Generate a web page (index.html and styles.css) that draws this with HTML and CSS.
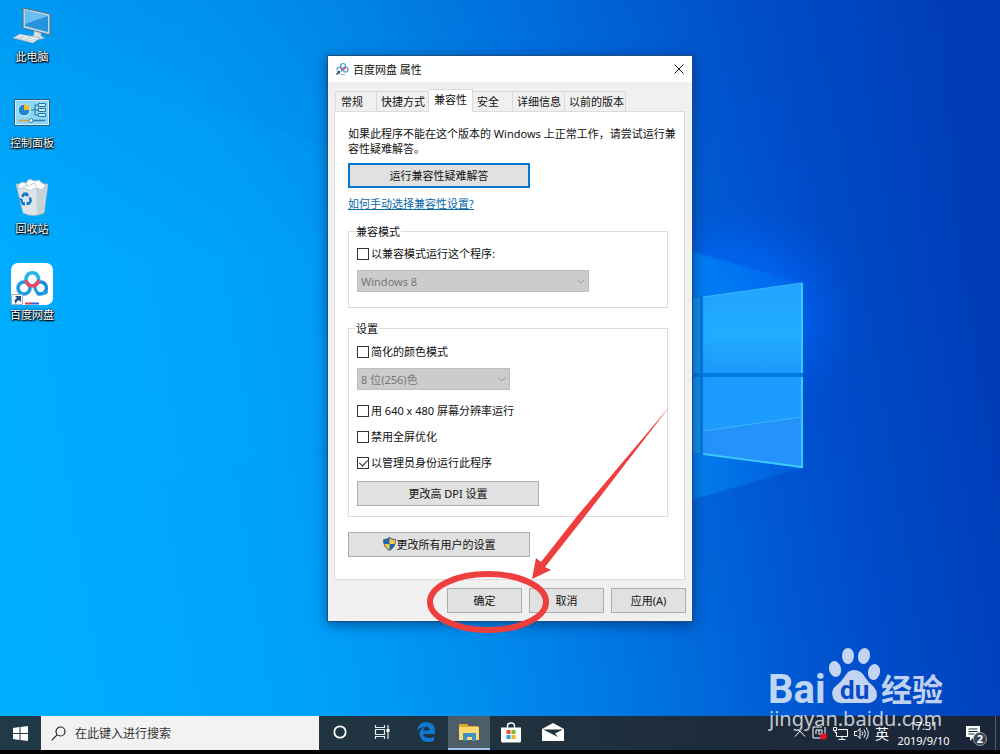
FILE: index.html
```html
<!DOCTYPE html>
<html lang="zh-CN">
<head>
<meta charset="utf-8">
<meta name="viewport" content="width=device-width, initial-scale=1">
<title>百度网盘 属性</title>
<link rel="stylesheet" href="styles.css">
</head>
<body>
<div class="desktop">
  <svg class="wallpaper" viewBox="0 0 1000 754" preserveAspectRatio="none" aria-hidden="true">
    <defs>
      <linearGradient id="base" x1="0" y1="0.56" x2="1" y2="0.44">
        <stop offset="0" stop-color="#00aeff"/>
        <stop offset="0.25" stop-color="#00a2fa"/>
        <stop offset="0.4" stop-color="#0092f0"/>
        <stop offset="0.6" stop-color="#0072e0"/>
        <stop offset="0.8" stop-color="#004fcc"/>
        <stop offset="1" stop-color="#003ab6"/>
      </linearGradient>
      <linearGradient id="shade" x1="0" y1="0" x2="0" y2="1">
        <stop offset="0" stop-color="#0048b8" stop-opacity="0.18"/>
        <stop offset="0.35" stop-color="#0048b8" stop-opacity="0"/>
      </linearGradient>
      <radialGradient id="glow">
        <stop offset="0" stop-color="#0078ff" stop-opacity="0.95"/>
        <stop offset="0.55" stop-color="#0068ff" stop-opacity="0.5"/>
        <stop offset="1" stop-color="#0058e8" stop-opacity="0"/>
      </radialGradient>
      <linearGradient id="pane" x1="0" y1="0" x2="0" y2="1">
        <stop offset="0" stop-color="#22a4ff"/>
        <stop offset="0.6" stop-color="#20acff"/>
        <stop offset="1" stop-color="#1c98fc"/>
      </linearGradient>
      <linearGradient id="ray" x1="0" y1="0" x2="1" y2="0">
        <stop offset="0" stop-color="#0088f4" stop-opacity="0.75"/>
        <stop offset="1" stop-color="#0070f0" stop-opacity="0.3"/>
      </linearGradient>
    </defs>
    <rect width="1000" height="754" fill="url(#base)"/>
    <rect width="1000" height="754" fill="url(#shade)"/>
    <path d="M0 50L330 146V440L0 520z" fill="#00b4ff" opacity="0.1"/>
    <ellipse cx="740" cy="315" rx="120" ry="115" fill="url(#glow)"/>
    <path d="M690 251L803 283V468L690 500z" fill="url(#ray)"/>
    <path d="M690 298L803 282V468L690 453z" fill="#0078dc"/>
    <path d="M703 297L803 283V373H703z" fill="url(#pane)"/>
    <path d="M703 377H803V468L703 454z" fill="#1c9cff"/>
    <path d="M703 431L803 417V468L703 454z" fill="#2492fa"/>
    <path d="M690 298H700V373H690zM690 377H700V453H690z" fill="#168fea"/>
    <path d="M703 297L802 283" fill="none" stroke="#34b8ff"/>
    <path d="M802 283V373M802 377V467L703 454" fill="none" stroke="#3cc8ff" stroke-width="2"/>
    <path d="M703 431L802 417" stroke="#3cb4ff"/>
  </svg>

  <main class="workspace">
    <nav class="shortcuts" aria-label="桌面">
      <button class="shortcut" type="button">
        <span class="shortcut-icon">
          <svg width="40" height="38" viewBox="0 0 40 38">
            <path d="M11 1L38 7V28L11 21z" fill="#b9d4e4" stroke="#52707f"/>
            <path d="M13 3.500L36 9V25L13 19z" fill="#2793df"/>
            <path d="M13 3.500L36 9L13 17z" fill="#6abdf0"/>
            <path d="M22 24l7 2v3l4 2-8 2-9-3 6-2z" fill="#d6e0e5" stroke="#8aa0ac" stroke-width=".6"/>
            <path d="M8 27L28 31L21 36L1 31z" fill="#f3f6f7" stroke="#8fa4ae" stroke-width=".7"/>
            <path d="M6 29l19 4M4 30.500l19 4M13 28l-6 4M19 29.500l-6 4" stroke="#b2bfc5" stroke-width=".7"/>
          </svg>
        </span>
        <span class="shortcut-label">此电脑</span>
      </button>
      <button class="shortcut" type="button">
        <span class="shortcut-icon">
          <svg width="36" height="27" viewBox="0 0 36 27">
            <rect x=".5" y=".5" width="35" height="26" fill="#8dd6f6" stroke="#31617a"/>
            <rect x="1.500" y="1.500" width="33" height="24" fill="none" stroke="#c9effc"/>
            <circle cx="10" cy="11" r="6" fill="#1d86cf" stroke="#e4f6fd"/>
            <path d="M10 11V5a6 6 0 0 1 6 6z" fill="#f7b92e"/>
            <path d="M17 11h4V6h3M21 11h3M21 11v5h3" fill="none" stroke="#25759f"/>
            <path d="M24.500 4.500h7v3h-7zM24.500 9.500h7v3h-7zM24.500 14.500h7v3h-7z" fill="#c9effc" stroke="#25759f"/>
            <path d="M4 21.500h12" stroke="#dd9f36" stroke-width="1.500"/>
            <path d="M16 21.500h15" stroke="#2c7dad" stroke-width="1.500"/>
            <circle cx="17" cy="21.500" r="2" fill="#fff" stroke="#2c7dad"/>
          </svg>
        </span>
        <span class="shortcut-label">控制面板</span>
      </button>
      <button class="shortcut" type="button">
        <span class="shortcut-icon">
          <svg width="34" height="38" viewBox="0 0 34 38">
            <path d="M1 5h32l-4 29q-11 5-21 0z" fill="#dfe6ea" stroke="#a6b6bf" stroke-width=".7"/>
            <path d="M21 8l11-2-4 28-6 2z" fill="#c6d1d8"/>
            <path d="M3 6l4-3 4 1 3-4 6 2 4-1 3 3 4 2-4 5-6-2-6 3-6-3-5 1z" fill="#fafbfb" stroke="#a9b6bd" stroke-width=".7"/>
            <path d="M10 4l4 3 5-3 3 4M8 8l5-2" fill="none" stroke="#b4c0c6" stroke-width=".8"/>
            <path d="M6 17l2.500-3.500h4L14 17l-3 .5-1-1.500L8.500 18.500zM13.500 19l2.500-1 1 4-2.500 4h-3v-3h2l1-1.500zM4.500 19l3 1 .5 3 2 .5v3L7 26z" fill="#1476c8"/>
          </svg>
        </span>
        <span class="shortcut-label">回收站</span>
      </button>
      <button class="shortcut" type="button">
        <span class="shortcut-icon">
          <svg width="42" height="42" viewBox="0 0 42 42">
            <rect width="42" height="42" rx="7" fill="#fff"/>
            <g fill="none" stroke-width="3.600" stroke-linecap="round">
              <circle cx="13" cy="25" r="6" stroke="#1a9be4"/>
              <path d="M24.500 21.500A6 6 0 1 1 27 30.500" stroke="#1a8fe0"/>
              <path d="M24.500 21.500Q22.500 25 27 30.500" stroke="#1a9be4" stroke-width="3"/>
              <path d="M32 30Q34.500 31 36 29" stroke="#1fa4e8" stroke-width="2.500"/>
              <path d="M15.300 18A6.300 6.300 0 1 1 27.300 18" stroke="#2cb2e8"/>
              <path d="M15.300 18.500A6.300 6.300 0 0 0 27.300 18.500" stroke="#ed4866"/>
            </g>
            <path d="M14 40.500h6" stroke="#e7364c" stroke-width="2"/>
            <path d="M20 40.500h8" stroke="#2a65d8" stroke-width="2"/>
            <path d="M.5 31.500h11v10H.5z" fill="#f5f7f9" stroke="#a8b3bd"/>
            <path d="M4 33h6v6l-2-2q-3 1-3 4-3-4 1-6z" fill="#174b7e"/>
          </svg>
        </span>
        <span class="shortcut-label">百度网盘</span>
      </button>
    </nav>

    <section class="dialog" role="dialog" aria-labelledby="dialog-title">
      <header class="titlebar">
        <svg width="14" height="14" viewBox="0 0 14 14" aria-hidden="true">
          <g fill="none" stroke-width="1.200">
            <circle cx="8" cy="4" r="2.500" stroke="#38a5d8"/>
            <circle cx="4.500" cy="7.500" r="2.500" stroke="#3c9bd0"/>
            <circle cx="10.500" cy="7.500" r="2.500" stroke="#3c9bd0"/>
            <path d="M5.500 5a2.500 2.500 0 0 0 5 0" stroke="#df5671"/>
          </g>
          <path d="M1 8h5v5H1z" fill="#e8edf1"/>
          <path d="M2 9h3v3l-1-1-2 2-1-1 2-2z" fill="#34506a"/>
          <path d="M6 12.500h4" stroke="#b1a6bd"/>
        </svg>
        <h1 class="title" id="dialog-title">百度网盘 属性</h1>
        <button class="close" type="button" aria-label="关闭">
          <svg width="10" height="10" viewBox="0 0 10 10"><path d="M.5 .5l9 9M9.500 .5l-9 9" stroke="#111"/></svg>
        </button>
      </header>

      <div class="tabs" role="tablist">
        <button class="tab" type="button" role="tab">常规</button>
        <button class="tab" type="button" role="tab">快捷方式</button>
        <button class="tab tab-active" type="button" role="tab" aria-selected="true">兼容性</button>
        <button class="tab" type="button" role="tab">安全</button>
        <button class="tab" type="button" role="tab">详细信息</button>
        <button class="tab" type="button" role="tab">以前的版本</button>
      </div>

      <div class="panel" role="tabpanel">
        <p class="intro">如果此程序不能在这个版本的 Windows 上正常工作，请尝试运行兼容性疑难解答。</p>
        <button class="button button-wide button-default" type="button">运行兼容性疑难解答</button>
        <a class="help" href="#">如何手动选择兼容性设置?</a>

        <fieldset class="group group-mode">
          <legend>兼容模式</legend>
          <label class="check"><input type="checkbox">以兼容模式运行这个程序:</label>
          <div class="picker picker-long">
            <select aria-label="兼容模式" disabled><option>Windows 8</option></select>
            <svg class="chevron" width="8" height="5" viewBox="0 0 8 5"><path d="M.5 .5L4 4L7.500 .5" fill="none" stroke="#999"/></svg>
          </div>
        </fieldset>

        <fieldset class="group group-settings">
          <legend>设置</legend>
          <label class="check"><input type="checkbox">简化的颜色模式</label>
          <div class="picker picker-short">
            <select aria-label="颜色模式" disabled><option>8 位(256)色</option></select>
            <svg class="chevron" width="8" height="5" viewBox="0 0 8 5"><path d="M.5 .5L4 4L7.500 .5" fill="none" stroke="#999"/></svg>
          </div>
          <div class="checks">
            <label class="check"><input type="checkbox">用 640 x 480 屏幕分辨率运行</label>
            <label class="check"><input type="checkbox">禁用全屏优化</label>
            <label class="check"><input type="checkbox" checked>以管理员身份运行此程序</label>
            <button class="button button-wide" type="button">更改高 DPI 设置</button>
          </div>
        </fieldset>

        <button class="button button-wide" type="button">
          <svg width="13" height="14" viewBox="0 0 13 14" aria-hidden="true">
            <path d="M6.500 .5Q9 2.500 12.500 2.500Q13 10 6.500 13.500Q0 10 .5 2.500Q4 2.500 6.500 .5z" fill="#1d66b4"/>
            <path d="M6.500 1Q9 2.800 12 3V7H6.500zM6.500 7V13Q2 10.500 1 7z" fill="#f7c843"/>
            <path d="M6.500 .5Q9 2.500 12.500 2.500Q13 10 6.500 13.500Q0 10 .5 2.500Q4 2.500 6.500 .5z" fill="none" stroke="#4b5d68" stroke-width=".8"/>
          </svg>更改所有用户的设置</button>
      </div>

      <footer class="actions">
        <button class="button" type="button">确定</button>
        <button class="button" type="button">取消</button>
        <button class="button" type="button">应用(A)</button>
      </footer>

      <svg class="markup" width="250" height="234" viewBox="0 0 250 234" aria-hidden="true">
        <ellipse cx="65" cy="197" rx="58" ry="28" fill="none" stroke="#ef3e3e" stroke-width="6"/>
        <path d="M247 1L155 110L118 157L113 153L109 174L128 165L122 162L163 110Z" fill="#ef3e3e"/>
      </svg>
    </section>

    <svg class="watermark" width="184" height="90" viewBox="0 0 184 90" role="img" aria-label="Baidu 经验">
      <g fill="#fff" fill-opacity=".76">
        <text class="mark-latin" x="4" y="58">Bai</text>
        <ellipse cx="71" cy="24" rx="6" ry="8" transform="rotate(-14 71 24)"/>
        <ellipse cx="84" cy="11" rx="6" ry="8"/>
        <ellipse cx="100" cy="11" rx="6" ry="8" transform="rotate(12 100 11)"/>
        <ellipse cx="110" cy="27" rx="6" ry="8" transform="rotate(12 110 27)"/>
        <path d="M90 25Q97 25 101 32Q104 37 109 41Q115 47 112 54Q108 59 101 58H80Q72 59 69 53Q66 45 73 40Q78 36 81 31Q84 25 90 25z"/>
        <text class="mark-cjk" x="117" y="56">经验</text>
        <text class="mark-url" x="5" y="81">jingyan.baidu.com</text>
      </g>
      <text class="mark-du" x="76" y="54">du</text>
    </svg>
  </main>

  <footer class="taskbar">
    <button class="start" type="button" aria-label="开始">
      <svg width="15" height="15" viewBox="0 0 15 15"><path d="M0 2L6.500 1V7H0zM7.500 .9L15 0V7H7.500zM0 8H6.500V14L0 13zM7.500 8H15V15L7.500 14z" fill="#fff"/></svg>
    </button>
    <label class="search">
      <svg width="15" height="15" viewBox="0 0 15 15" aria-hidden="true"><circle cx="9.500" cy="5.500" r="4.500" fill="none" stroke="#222" stroke-width="1.200"/><path d="M6.300 8.700L.6 14.400" stroke="#222" stroke-width="1.200"/></svg>
      <input type="text" placeholder="在此键入进行搜索" aria-label="搜索">
    </label>
    <div class="apps">
      <button class="app" type="button" aria-label="Cortana">
        <svg width="14" height="14" viewBox="0 0 14 14"><circle cx="7" cy="7" r="5.700" fill="none" stroke="#fff" stroke-width="1.800"/></svg>
      </button>
      <button class="app" type="button" aria-label="任务视图">
        <svg width="16" height="14" viewBox="0 0 16 14"><path d="M1.500 4.500h9v5h-9zM1.500 0v2.500h9V0M1.500 14v-2.500h9V14M14 0v14" fill="none" stroke="#e4eaed" stroke-width="1.200"/><path d="M12.500 4h3v3h-3z" fill="#fff"/></svg>
      </button>
      <button class="app app-edge" type="button" aria-label="Edge">
        <svg width="18" height="20" viewBox="0 0 18 20"><path d="M0 9Q1 0 10 0Q18 1 18 9V12H6Q7 16 12 16Q15 16 17 14.500V18.500Q14 20 10.500 20Q3 19 2.500 12Q2.500 7 7.500 5Q3 5 0 9zM6.200 8.500H12.500Q12.500 4.500 9.500 4.500Q6.800 5 6.200 8.500z" fill="#0f79d3"/></svg>
      </button>
      <button class="app app-active" type="button" aria-label="文件资源管理器">
        <svg width="20" height="17" viewBox="0 0 20 17"><path d="M0 0h8l2 2h9v4H0z" fill="#dda62b"/><path d="M0 3h20v13H0z" fill="#fbd96c"/><path d="M4 17V9h13v8h-4v-4H8v4z" fill="#3c8fc9"/></svg>
      </button>
      <button class="app" type="button" aria-label="Microsoft Store">
        <svg width="20" height="21" viewBox="0 0 20 21"><path d="M6.500 6V4q0-3 3.500-3t3.500 3v2" fill="none" stroke="#fff" stroke-width="1.400"/><path d="M0 5.500h20V19q0 1.500-1.500 1.500h-17Q0 20.500 0 19z" fill="#fff"/><path d="M5.500 8h4v4h-4z" fill="#e74f2c"/><path d="M10.500 8h4v4h-4z" fill="#7cb82f"/><path d="M5.500 13h4v4h-4z" fill="#25a0dc"/><path d="M10.500 13h4v4h-4z" fill="#f5b521"/></svg>
      </button>
      <button class="app" type="button" aria-label="邮件">
        <svg width="22" height="18" viewBox="0 0 22 18"><path d="M0 6L11 0L22 6V18H0z" fill="#fff"/><path d="M1 6.500H21L13 10.500L16 14L10 11z" fill="#20323d"/></svg>
      </button>
    </div>
    <div class="tray">
      <svg width="12" height="7" viewBox="0 0 12 7"><path d="M1 6.500L6 1L11 6.500" fill="none" stroke="#fff"/></svg>
      <svg width="15" height="14" viewBox="0 0 15 14"><path d="M10 1H1v11h8M13 1v7M4 8V4h6v4H6M7 4v3" fill="none" stroke="#fff"/><circle cx="11.500" cy="10.500" r="3.300" fill="#e81123"/></svg>
      <svg width="15" height="13" viewBox="0 0 15 13"><path d="M5 2.500h9.500v7H3.500v-4M9 9.500v3M5.500 12.500h7M.5 .5h3v3h-3zM2 3.500v2h2" fill="none" stroke="#fff"/></svg>
      <svg width="15" height="13" viewBox="0 0 15 13"><path d="M.5 4.500H3L6 1.500v10L3 8.500H.5zM8 4.500q1.500 2 0 4M10 2.500q3 4 0 8M12 .5q4.500 6 0 12" fill="none" stroke="#fff"/></svg>
      <span class="ime">英</span>
    </div>
    <div class="clock"><time>17:31</time><time>2019/9/10</time></div>
    <button class="notices" type="button" aria-label="通知">
      <svg width="22" height="22" viewBox="0 0 22 22"><path d="M0 1h14v11H8l-4 4v-4H0z" fill="#fff"/><path d="M2.500 4h9M2.500 6.500h9M2.500 9h6" stroke="#1d2c3c"/><circle cx="14" cy="14" r="6.500" fill="#344450" stroke="#99a3aa"/><text class="badge" x="14" y="18">2</text></svg>
    </button>
  </footer>
</div>
</body>
</html>
```

FILE: styles.css
```css
* { box-sizing: border-box; }

body {
  margin: 0;
  font-family: "Noto Sans", "Noto Sans CJK SC", sans-serif;
  font-size: 11px;
  line-height: 15px;
  color: #111;
}

button, input, select {
  margin: 0;
  padding: 0;
  border: 0;
  border-radius: 0;
  background: none;
  font: inherit;
  color: inherit;
}

svg { display: block; flex: none; }

.desktop {
  position: relative;
  display: flex;
  flex-direction: column;
  min-height: 100vh;
  overflow: hidden;
}

.wallpaper {
  position: absolute;
  inset: 0;
  width: 100%;
  height: 100%;
}

.workspace {
  position: relative;
  flex: 1;
  min-height: 640px;
}

/* Desktop shortcuts */
.shortcuts {
  display: flex;
  flex-direction: column;
  gap: 20px;
  width: 64px;
  padding-top: 5px;
}

.shortcut {
  display: flex;
  flex-direction: column;
  align-items: center;
  gap: 1px;
  height: 66px;
}

.shortcut-icon {
  display: flex;
  align-items: center;
  justify-content: center;
  height: 42px;
}

.shortcut-label {
  line-height: 18px;
  color: #fff;
  text-shadow: 1px 1px 1px #000, 0 1px 2px #000, 0 0 2px #000;
}

/* Properties window */
.dialog {
  position: absolute;
  top: 55px;
  left: 327px;
  width: 366px;
  border: 1px solid #1d4f80;
  background: #f0f0f0;
  box-shadow: 0 3px 12px rgba(0, 20, 70, 0.5);
}

.titlebar {
  display: flex;
  align-items: center;
  gap: 4px;
  height: 26px;
  padding-left: 7px;
  background: #fff;
}

.title {
  flex: 1;
  margin: 0;
  font-size: 11px;
  font-weight: 400;
}

.close {
  display: flex;
  align-items: center;
  justify-content: center;
  width: 26px;
  height: 26px;
}

.tabs {
  display: flex;
  align-items: flex-end;
  padding: 7px 7px 0;
}

.tab {
  width: 52px;
  height: 20px;
  padding: 0 0 0 4px;
  border: 1px solid #d9d9d9;
  border-bottom: 0;
  text-align: left;
  white-space: nowrap;
}

.tab + .tab { border-left: 0; }
.tab:first-child { width: 42px; padding-left: 5px; }
.tab:nth-child(3) { width: 44px; }
.tab:nth-child(4) { width: 40px; }
.tab:last-child { width: 61px; }

.tab-active {
  position: relative;
  height: 23px;
  margin-bottom: -1px;
  padding: 0 0 3px 5px;
  background: #fff;
}

.panel {
  display: flex;
  flex-direction: column;
  align-items: flex-start;
  margin: 0 7px 0 6px;
  padding: 14px 16px 22px 13px;
  border: 1px solid #dcdcdc;
  background: #fff;
}

.intro { margin: 0 -12px 7px 0; }

.button {
  display: flex;
  align-items: center;
  justify-content: center;
  gap: 1px;
  width: 75px;
  height: 25px;
  padding-bottom: 1px;
  border: 1px solid #adadad;
  background: #e1e1e1;
}

.button-wide { width: 182px; }
.button-default { border: 2px solid #0078d7; }

.help {
  margin: 8px 0 13px;
  color: #0868a8;
}

.group {
  align-self: stretch;
  min-width: 0;
  margin: 0;
  border: 1px solid #dcdcdc;
}

.group legend {
  margin-left: -2px;
  padding: 0 1px;
}

.group-mode {
  margin-bottom: 13px;
  padding: 7px 8px 15px;
}

.group-settings {
  margin-bottom: 15px;
  padding: 8px 8px 10px;
}

.check {
  display: flex;
  align-items: center;
  gap: 2px;
}

.check input {
  position: relative;
  appearance: none;
  width: 12px;
  height: 12px;
  border: 1px solid #333;
  background: #fff;
}

.check input:checked::before {
  content: "";
  position: absolute;
  top: 0;
  left: 3px;
  width: 4px;
  height: 7px;
  border: solid #222;
  border-width: 0 1px 1px 0;
  transform: rotate(42deg);
}

.picker {
  position: relative;
  margin-top: 9px;
}

.picker-long { width: 232px; }
.picker-short { width: 153px; }

.picker select {
  display: block;
  appearance: none;
  width: 100%;
  height: 22px;
  padding: 0 3px;
  border: 1px solid #bfbfbf;
  background: #ccc;
  color: #787878;
  opacity: 1;
}

.chevron {
  position: absolute;
  top: 9px;
  right: 4px;
}

.checks {
  display: flex;
  flex-direction: column;
  gap: 11px;
  margin-top: 13px;
}

.actions {
  display: flex;
  justify-content: flex-end;
  gap: 7px;
  padding: 8px 6px 8px;
}

.markup {
  position: absolute;
  right: 19px;
  bottom: -18px;
  width: 250px;
  pointer-events: none;
}

/* Site mark */
.watermark {
  position: absolute;
  z-index: 2;
  right: 52px;
  bottom: -19px;
}

.mark-latin { font: 700 40px Roboto, sans-serif; }
.mark-cjk { font: 700 31px "Noto Sans CJK SC", sans-serif; }
.mark-url { font: 400 20px "Noto Sans", sans-serif; }
.mark-du { font: 700 26px Roboto, sans-serif; fill: #0a49c4; }

/* Taskbar */
.taskbar {
  position: relative;
  display: flex;
  height: 38px;
  border-bottom: 4px solid #000;
  background: linear-gradient(90deg, #203a47, #20323f 50%, #1a2538);
  color: #fff;
}

.start {
  display: flex;
  align-items: center;
  justify-content: center;
  width: 41px;
}

.search {
  display: flex;
  align-items: center;
  gap: 9px;
  width: 278px;
  padding-left: 10px;
  background: #f2f2f2;
}

.search input {
  flex: 1;
  min-width: 0;
  height: 100%;
  font-size: 12px;
  color: #222;
}

.search input::placeholder { color: #333; opacity: 1; }

.apps { display: flex; }

.app {
  display: flex;
  align-items: center;
  justify-content: center;
  width: 42px;
  border-bottom: 2px solid transparent;
}

.app-edge { width: 45px; }

.app-active {
  border-bottom-color: #9cc3ec;
  background: #4e5e68;
}

.tray {
  display: flex;
  align-items: center;
  gap: 6px;
  margin-left: auto;
}

.ime { font-size: 14px; }

.clock {
  display: flex;
  flex-direction: column;
  align-items: center;
  justify-content: center;
  width: 69px;
}

.notices {
  display: flex;
  align-items: center;
  justify-content: center;
  width: 38px;
  margin-right: 4px;
  padding: 6px 0 0;
  border-right: 1px solid #53606c;
}

.badge {
  font: 700 11px "Noto Sans", sans-serif;
  fill: #fff;
  text-anchor: middle;
}
```
